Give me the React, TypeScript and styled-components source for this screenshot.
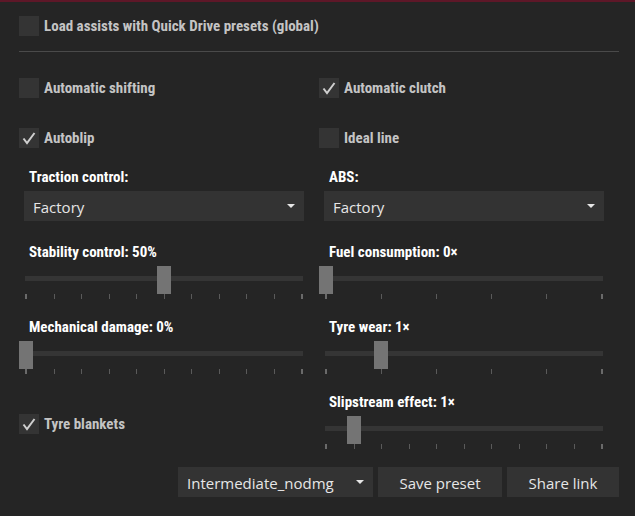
import React from "react";
import styled, { createGlobalStyle } from "styled-components";

interface SliderSetting {
    label: string;
    value: number;
    max: number;
    ticks: number;
}

const GlobalStyle = createGlobalStyle`
    html, body {
        margin: 0;
        padding: 0;
        background: #252525;
    }
`;

const CheckMark = () => (
    <svg width="20" height="20" viewBox="0 0 20 20">
        <path d="M4.5 10.5 L8 15 L15.5 5" fill="none" stroke="#cfcfcf" strokeWidth="2" />
    </svg>
);

const Check: React.FC<{ label: string; checked?: boolean; top?: number }> = ({ label, checked, top }) => (
    <CheckRow $top={top}>
        <Box>{checked && <CheckMark />}</Box>
        <CheckLabel>{label}</CheckLabel>
    </CheckRow>
);

const Dropdown: React.FC<{ label: string; value: string }> = ({ label, value }) => (
    <Field>
        <FieldLabel>{label}</FieldLabel>
        <Select>
            {value}
            <Arrow />
        </Select>
    </Field>
);

const Slider: React.FC<{ setting: SliderSetting }> = ({ setting }) => {
    const fraction = setting.value / setting.max;
    return (
        <Field>
            <FieldLabel>{setting.label}</FieldLabel>
            <SliderBox>
                <SliderBody>
                    <Track />
                    <Thumb style={{ left: fraction * 276 - 6 }} />
                </SliderBody>
                <TickRow>
                    {Array.from({ length: setting.ticks }).map((_, i) => (
                        <Tick key={i} $edge={i === 0 || i === setting.ticks - 1} />
                    ))}
                </TickRow>
            </SliderBox>
        </Field>
    );
};

const App: React.FC = () => {
    return (
        <>
            <GlobalStyle />
            <Page>
                <Check label="Load assists with Quick Drive presets (global)" />
                <Separator />
                <Columns>
                    <Column>
                        <Check label="Automatic shifting" />
                        <Check label="Autoblip" checked />
                        <Dropdown label="Traction control:" value="Factory" />
                        <Slider setting={{ label: "Stability control: 50%", value: 50, max: 100, ticks: 11 }} />
                        <Slider setting={{ label: "Mechanical damage: 0%", value: 0, max: 100, ticks: 11 }} />
                        <Check label="Tyre blankets" checked top={41} />
                    </Column>
                    <Column>
                        <Check label="Automatic clutch" checked />
                        <Check label="Ideal line" />
                        <Dropdown label="ABS:" value="Factory" />
                        <Slider setting={{ label: "Fuel consumption: 0×", value: 0, max: 5, ticks: 6 }} />
                        <Slider setting={{ label: "Tyre wear: 1×", value: 1, max: 5, ticks: 6 }} />
                        <Slider setting={{ label: "Slipstream effect: 1×", value: 1, max: 10, ticks: 11 }} />
                    </Column>
                </Columns>
                <BottomBar>
                    <PresetSelect>
                        Intermediate_nodmg
                        <Arrow />
                    </PresetSelect>
                    <Button $width={124}>Save preset</Button>
                    <Button $width={112}>Share link</Button>
                </BottomBar>
            </Page>
        </>
    );
};

export default App;

const labelFont = `
    font-family: "Roboto Condensed", "Liberation Sans", sans-serif;
    font-weight: bold;
    font-size: 15px;
    line-height: 20px;
    white-space: nowrap;
`;

const Page = styled.div`
    width: 635px;
    height: 516px;
    box-sizing: border-box;
    border-top: 2px solid #5e1728;
    padding: 14px 16px 0 19px;
    background: #252525;
    overflow: hidden;
`;

const CheckRow = styled.div<{ $top?: number }>`
    display: flex;
    align-items: center;
    height: 20px;
    gap: 5px;
    & + & {
        margin-top: 30px;
    }
    ${({ $top }) => ($top !== undefined ? `margin-top: ${$top}px !important;` : "")}
`;

const Box = styled.div`
    width: 20px;
    height: 20px;
    background: #343434;
    flex-shrink: 0;
`;

const CheckLabel = styled.span`
    ${labelFont}
    color: #c4c4c4;
`;

const Separator = styled.div`
    width: 600px;
    height: 1px;
    margin-top: 15px;
    background: #4a4a4a;
`;

const Columns = styled.div`
    display: grid;
    grid-template-columns: 300px 300px;
    margin-top: 26px;
`;

const Column = styled.div`
    display: flex;
    flex-direction: column;
`;

const Field = styled.div`
    display: flex;
    flex-direction: column;
    margin-top: 19px;
`;

const FieldLabel = styled.div`
    ${labelFont}
    margin-left: 10px;
    color: #ffffff;
`;

const Select = styled.div`
    position: relative;
    box-sizing: border-box;
    width: 280px;
    height: 30px;
    margin: 4px 0 2px 5px;
    padding: 3px 0 0 9px;
    background: #333333;
    font-family: "Open Sans", sans-serif;
    font-size: 15px;
    line-height: 27px;
    color: #e6e6e6;
`;

const PresetSelect = styled(Select)`
    width: 195px;
    margin: 0;
`;

const Arrow = styled.span`
    position: absolute;
    right: 9px;
    top: 13px;
    width: 0;
    height: 0;
    border-left: 4px solid transparent;
    border-right: 4px solid transparent;
    border-top: 4px solid #e6e6e6;
`;

const SliderBox = styled.div`
    width: 278px;
    margin: 4px 0 0 6px;
    display: flex;
    flex-direction: column;
`;

const SliderBody = styled.div`
    position: relative;
    height: 28px;
`;

const Track = styled.div`
    position: absolute;
    left: 0;
    right: 0;
    top: 10px;
    height: 5px;
    background: #353535;
`;

const Thumb = styled.div`
    position: absolute;
    top: 0;
    width: 14px;
    height: 28px;
    background: #747474;
`;

const TickRow = styled.div`
    display: flex;
    justify-content: space-between;
    height: 4px;
`;

const Tick = styled.div<{ $edge: boolean }>`
    width: ${({ $edge }) => ($edge ? 2 : 1)}px;
    height: 5px;
    background: ${({ $edge }) => ($edge ? "#6a6a6a" : "#5a5a5a")};
`;

const BottomBar = styled.div`
    display: flex;
    justify-content: flex-end;
    gap: 5px;
    width: 600px;
    margin-top: 19px;
`;

const Button = styled.div<{ $width: number }>`
    box-sizing: border-box;
    width: ${({ $width }) => $width}px;
    height: 30px;
    padding-top: 3px;
    background: #333333;
    font-family: "Open Sans", sans-serif;
    font-size: 15px;
    line-height: 27px;
    color: #e6e6e6;
    text-align: center;
`;
